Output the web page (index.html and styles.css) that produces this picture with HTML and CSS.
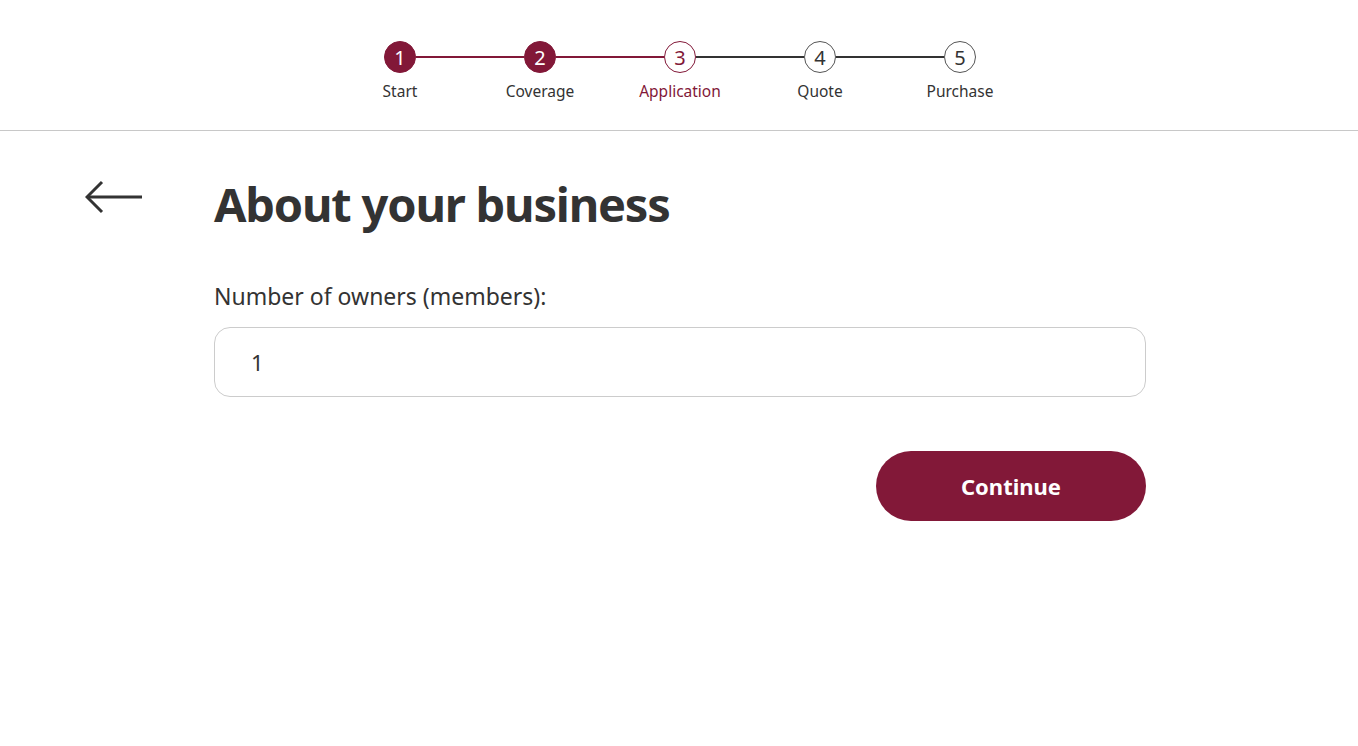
FILE: index.html
```html
<!DOCTYPE html>
<html lang="en">
	<head>
		<meta charset="UTF-8">
		<meta name="viewport" content="width=device-width, initial-scale=1">
		<title>About your business</title>
		<link rel="stylesheet" href="styles.css">
	</head>
	<body>
		<header class="top">
			<ol class="steps">
				<li class="step done">
					<span class="dot">1</span>
					<span class="name">Start</span>
				</li>
				<li class="step done">
					<span class="dot">2</span>
					<span class="name">Coverage</span>
				</li>
				<li class="step current">
					<span class="dot">3</span>
					<span class="name">Application</span>
				</li>
				<li class="step">
					<span class="dot">4</span>
					<span class="name">Quote</span>
				</li>
				<li class="step">
					<span class="dot">5</span>
					<span class="name">Purchase</span>
				</li>
			</ol>
		</header>

		<main class="content">
			<a class="back" href="#" aria-label="Back">
				<svg width="58" height="34" viewBox="0 0 58 34" fill="none" stroke="#333" stroke-width="3">
					<path d="M57 17H3"/>
					<path d="M17 2L2 17l15 15"/>
				</svg>
			</a>
			<form class="form">
				<h1 class="title">About your business</h1>
				<label class="label" for="owners">Number of owners (members):</label>
				<input class="field" id="owners" type="text" value="1">
				<div class="actions">
					<button class="continue" type="button">Continue</button>
				</div>
			</form>
		</main>
	</body>
</html>
```

FILE: styles.css
```css
*{
	margin: 0;
	padding: 0;
	box-sizing: border-box;
}
body{
	font-family: "Noto Sans", "Open Sans", sans-serif;
	color: #333;
	background: #fff;
}
.top{
	height: 131px;
	border-bottom: 1px solid #c8c8c8;
	display: flex;
	justify-content: center;
	padding: 41px 0 0 2px;
}
.steps{
	list-style: none;
	display: flex;
}
.step{
	width: 140px;
	display: flex;
	flex-direction: column;
	align-items: center;
	position: relative;
}
.step + .step::before{
	content: '';
	position: absolute;
	top: 15px;
	right: 86px;
	width: 108px;
	height: 2px;
	background: #333;
}
.step.done + .step::before{
	background: #821838;
}
.dot{
	width: 32px;
	height: 32px;
	border-radius: 50%;
	border: 1px solid #555;
	background: #fff;
	display: flex;
	align-items: center;
	justify-content: center;
	font-size: 20px;
	color: #333;
}
.done .dot{
	background: #821838;
	border-color: #821838;
	color: #fff;
}
.current .dot{
	border-color: #821838;
	color: #821838;
}
.name{
	margin-top: 7px;
	font-size: 15.5px;
	color: #333;
}
.current .name{
	color: #821838;
}
.content{
	display: flex;
	padding: 48px 0 0 85px;
}
.back{
	display: block;
	width: 58px;
	height: 34px;
	margin-top: 1px;
}
.form{
	width: 932px;
	margin-left: 71px;
}
.title{
	font-size: 47px;
	font-weight: 700;
	line-height: 50px;
	letter-spacing: -1.2px;
	color: #333;
}
.label{
	display: block;
	margin-top: 52px;
	font-size: 23px;
	line-height: 30px;
}
.field{
	display: block;
	width: 100%;
	height: 70px;
	margin-top: 16px;
	padding: 0 36px;
	border: 1px solid #ccc;
	border-radius: 16px;
	font: inherit;
	font-size: 22px;
	color: #333;
	outline: none;
}
.actions{
	display: flex;
	justify-content: flex-end;
	margin-top: 54px;
}
.continue{
	width: 270px;
	height: 70px;
	border: none;
	border-radius: 35px;
	background: #821838;
	color: #fff;
	font: inherit;
	font-size: 22px;
	font-weight: 700;
	cursor: pointer;
}
```
